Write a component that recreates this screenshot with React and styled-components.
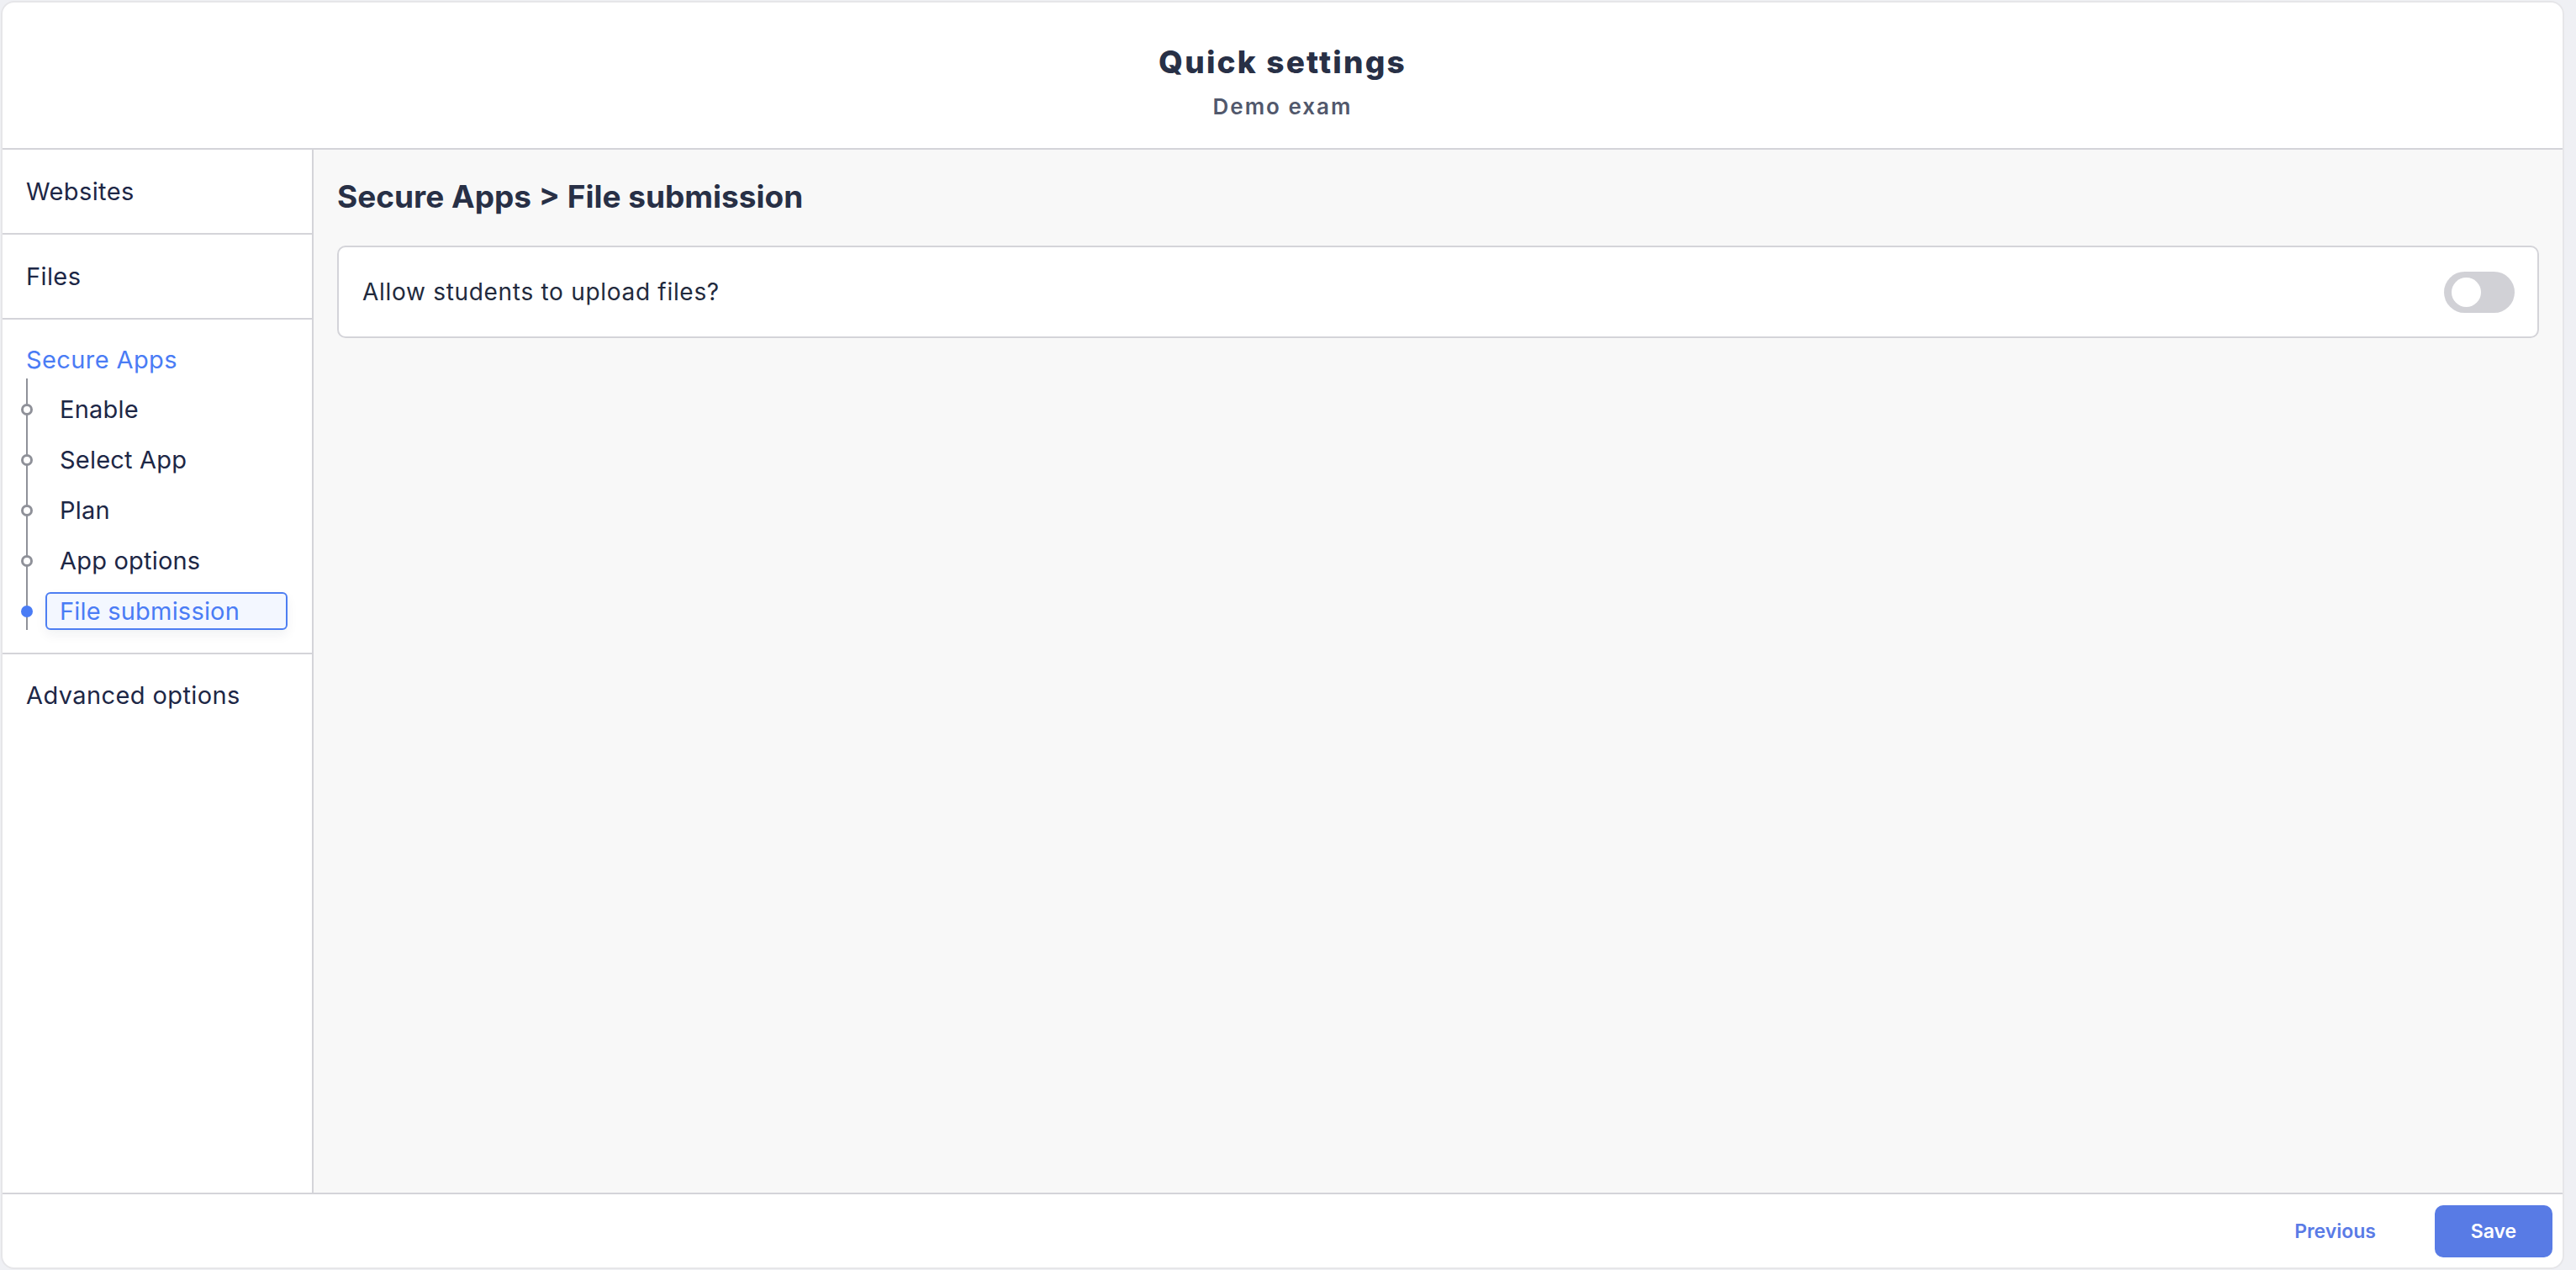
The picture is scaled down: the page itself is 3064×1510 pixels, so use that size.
import React from 'react';
import styled, { createGlobalStyle } from 'styled-components';

const GlobalStyle = createGlobalStyle`
  html, body {
    margin: 0;
    padding: 0;
    background: #eff0f4;
  }
  body {
    font-family: Inter, "Noto Sans", "Liberation Sans", sans-serif;
    color: #1d2746;
  }
  * { box-sizing: border-box; }
`;

const Frame = styled.div`
  width: 3049px;
  height: 1508px;
  margin: 1px 0 0 1px;
  background: #fff;
  border: 2px solid #e6e6e9;
  border-radius: 16px;
  overflow: hidden;
  display: flex;
  flex-direction: column;
`;

const Header = styled.header`
  height: 175px;
  flex-shrink: 0;
  border-bottom: 2px solid #d4d4d9;
  display: flex;
  flex-direction: column;
  align-items: center;
  padding-top: 47px;
`;

const Title = styled.h1`
  margin: 0;
  font-size: 37px;
  line-height: 48px;
  font-weight: 800;
  letter-spacing: 2.2px;
  color: #283046;
`;

const Subtitle = styled.div`
  margin-top: 13px;
  font-size: 26px;
  line-height: 32px;
  font-weight: 600;
  letter-spacing: 2px;
  color: #51586c;
`;

const Body = styled.div`
  flex: 1;
  display: flex;
  min-height: 0;
`;

const Sidebar = styled.nav`
  width: 370px;
  flex-shrink: 0;
  border-right: 2px solid #d4d4d9;
  background: #fff;
`;

const NavSection = styled.div`
  border-bottom: ${p => (p.$last ? 'none' : '2px solid #d4d4d9')};
  padding: ${p => (p.$open ? '28px 0 27px' : '0')};
  height: ${p => (p.$open ? 'auto' : p.$last ? '98px' : '101px')};
  display: flex;
  flex-direction: column;
  justify-content: ${p => (p.$open ? 'flex-start' : 'center')};
`;

const NavLink = styled.a`
  display: block;
  padding-left: 28px;
  font-size: 29px;
  line-height: 40px;
  letter-spacing: 0.4px;
  color: ${p => (p.$active ? '#4a7cf5' : '#1d2746')};
  text-decoration: none;
`;

const StepList = styled.ul`
  list-style: none;
  margin: 2px 0 0 28px;
  padding: 14px 0 0;
  border-left: 2px solid #8f9199;
  display: flex;
  flex-direction: column;
  gap: 15px;
`;

const Step = styled.li`
  display: flex;
  align-items: center;
  height: 45px;
`;

const Dot = styled.span`
  width: 14px;
  height: 14px;
  margin-left: -8px;
  flex-shrink: 0;
  border-radius: 50%;
  background: ${p => (p.$active ? '#4a7cf5' : '#fff')};
  border: 3px solid ${p => (p.$active ? '#4a7cf5' : '#8f9199')};
`;

const StepLabel = styled.a`
  margin-left: 15px;
  width: 288px;
  height: 45px;
  display: flex;
  align-items: center;
  padding-left: 15px;
  border-radius: 6px;
  border: 2px solid ${p => (p.$active ? '#4d7ef2' : 'transparent')};
  background: ${p => (p.$active ? '#f3f7ff' : 'transparent')};
  box-shadow: ${p => (p.$active ? '0 6px 14px rgba(20, 30, 60, 0.06)' : 'none')};
  font-size: 29px;
  letter-spacing: 0.2px;
  color: ${p => (p.$active ? '#4a7cf5' : '#1d2746')};
  text-decoration: none;
`;

const Main = styled.main`
  flex: 1;
  background: #f8f8f8;
  padding: 38px 28px 28px 28px;
`;

const Heading = styled.h2`
  margin: 0 0 40px;
  font-size: 37px;
  line-height: 36px;
  font-weight: 700;
  color: #283046;
`;

const Card = styled.div`
  height: 110px;
  background: #fff;
  border: 2px solid #d4d4d9;
  border-radius: 10px;
  display: flex;
  align-items: center;
  justify-content: space-between;
  padding: 0 27px 0 28px;
`;

const CardText = styled.span`
  font-size: 28px;
  letter-spacing: 0.7px;
  color: #222a3d;
`;

const Toggle = styled.button`
  width: 84px;
  height: 49px;
  border: none;
  border-radius: 25px;
  background: #d1d1d6;
  padding: 0 0 0 9px;
  display: flex;
  align-items: center;
  cursor: pointer;
`;

const Knob = styled.span`
  width: 35px;
  height: 35px;
  border-radius: 50%;
  background: #fff;
`;

const Footer = styled.footer`
  height: 89px;
  flex-shrink: 0;
  border-top: 2px solid #d4d4d9;
  display: flex;
  align-items: center;
  justify-content: flex-end;
  padding-right: 12px;
  gap: 56px;
`;

const TextButton = styled.button`
  background: none;
  border: none;
  padding: 0 14px;
  font-family: inherit;
  font-size: 23px;
  font-weight: 600;
  color: #5a7be6;
  cursor: pointer;
`;

const PrimaryButton = styled.button`
  width: 140px;
  height: 62px;
  border: none;
  border-radius: 10px;
  background: #587be5;
  color: #fff;
  font-family: inherit;
  font-size: 23px;
  font-weight: 600;
  cursor: pointer;
`;

const steps = ['Enable', 'Select App', 'Plan', 'App options', 'File submission'];

export default function App() {
  return (
    <>
      <GlobalStyle />
      <Frame>
        <Header>
          <Title>Quick settings</Title>
          <Subtitle>Demo exam</Subtitle>
        </Header>
        <Body>
          <Sidebar>
            <NavSection><NavLink href="#">Websites</NavLink></NavSection>
            <NavSection><NavLink href="#">Files</NavLink></NavSection>
            <NavSection $open>
              <NavLink href="#" $active>Secure Apps</NavLink>
              <StepList>
                {steps.map((s, i) => {
                  const active = i === steps.length - 1;
                  return (
                    <Step key={s}>
                      <Dot $active={active} />
                      <StepLabel href="#" $active={active}>{s}</StepLabel>
                    </Step>
                  );
                })}
              </StepList>
            </NavSection>
            <NavSection $last><NavLink href="#">Advanced options</NavLink></NavSection>
          </Sidebar>
          <Main>
            <Heading>Secure Apps &gt; File submission</Heading>
            <Card>
              <CardText>Allow students to upload files?</CardText>
              <Toggle aria-label="Allow students to upload files"><Knob /></Toggle>
            </Card>
          </Main>
        </Body>
        <Footer>
          <TextButton>Previous</TextButton>
          <PrimaryButton>Save</PrimaryButton>
        </Footer>
      </Frame>
    </>
  );
}
